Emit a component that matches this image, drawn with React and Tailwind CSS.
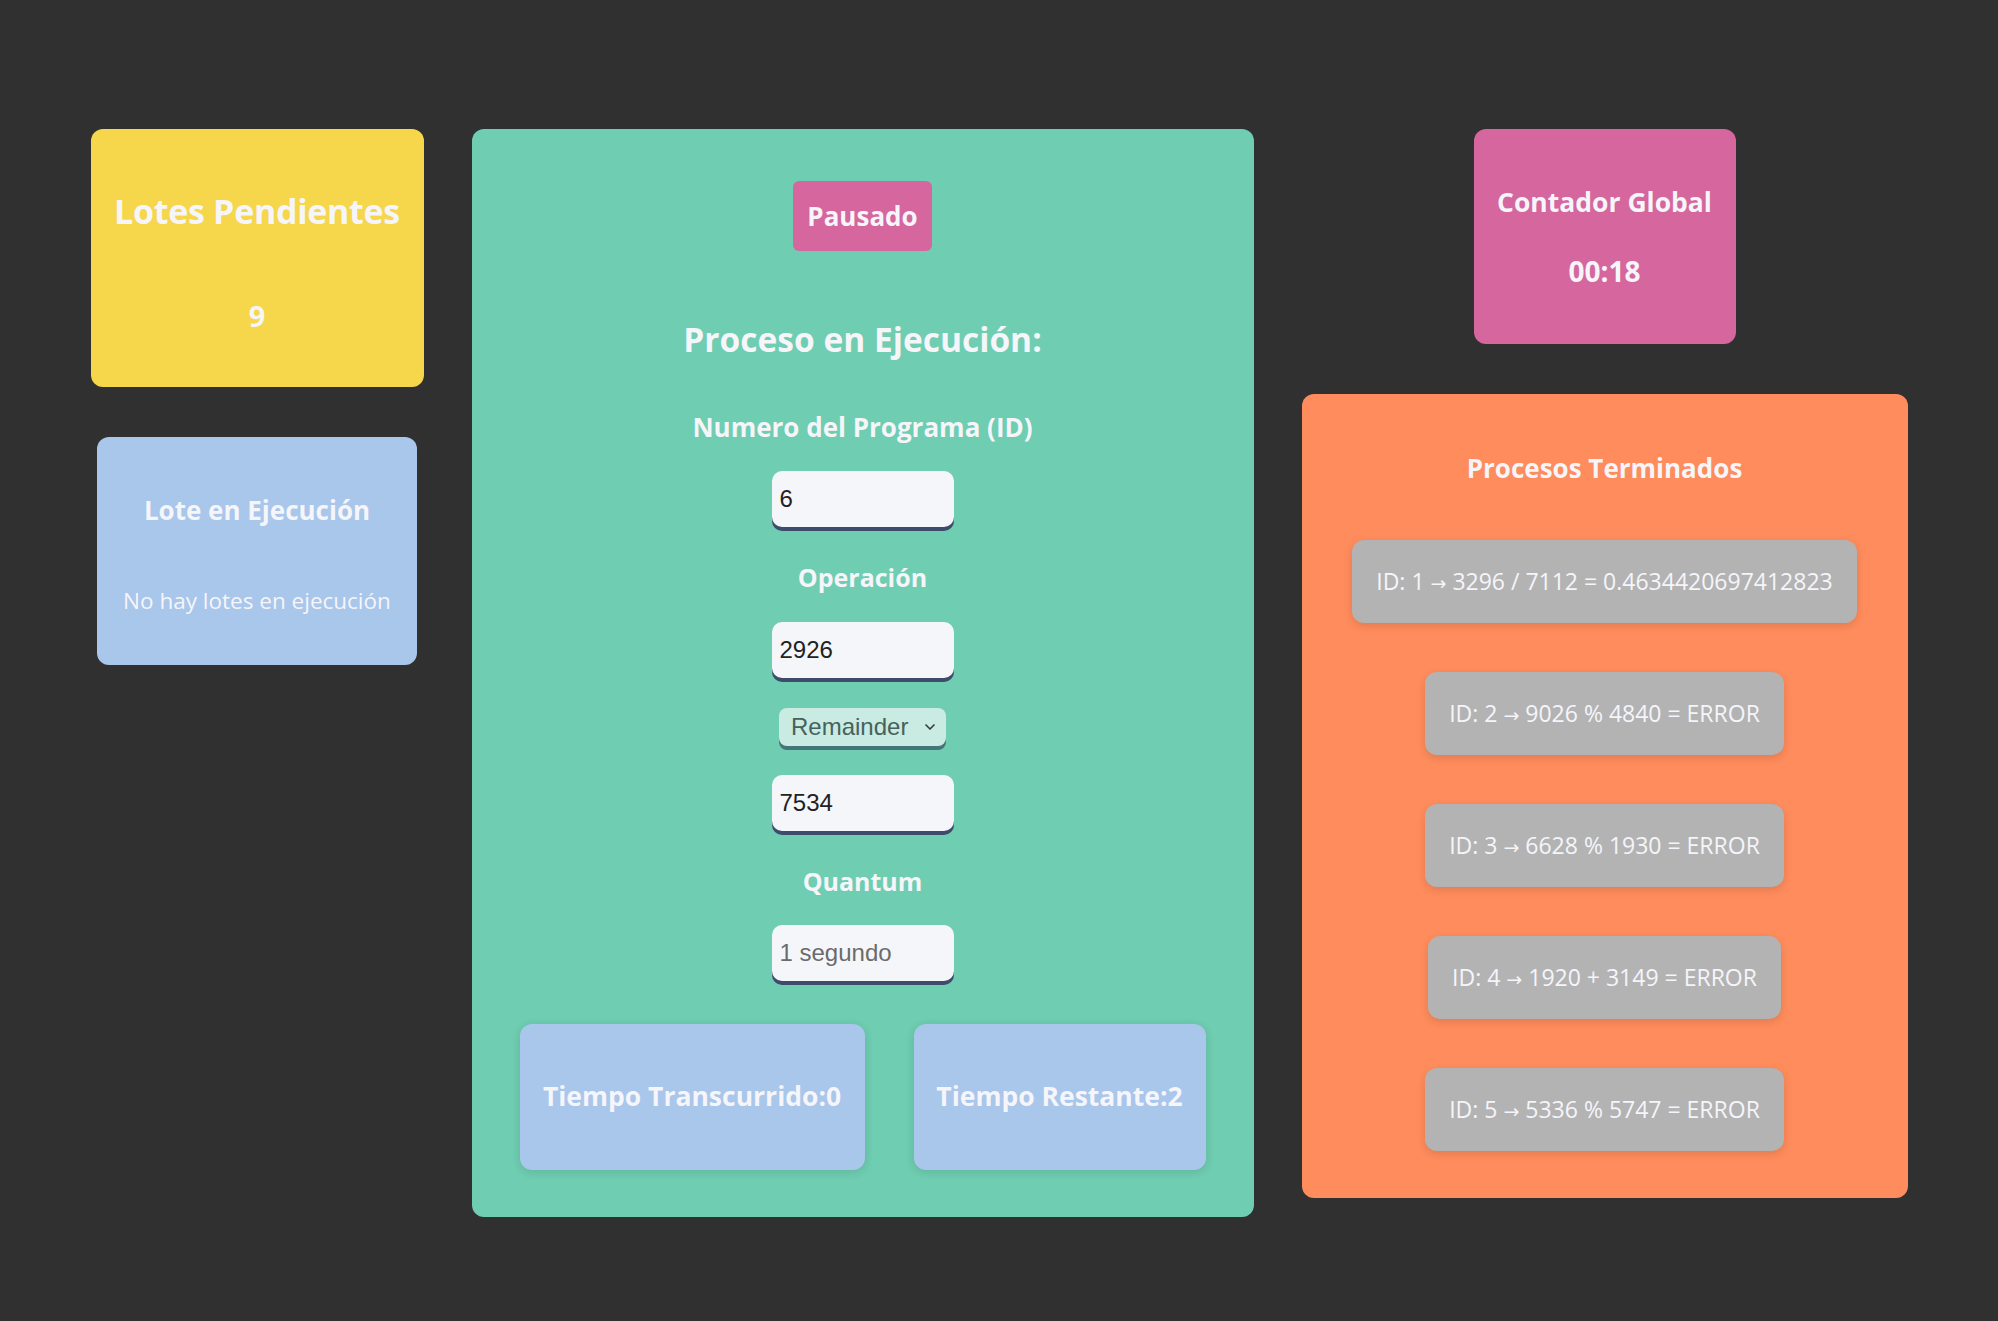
import { ChevronDown } from 'lucide-react';

const terminados = [
  ['ID: 1', '3296 / 7112 = 0.4634420697412823'],
  ['ID: 2', '9026 % 4840 = ERROR'],
  ['ID: 3', '6628 % 1930 = ERROR'],
  ['ID: 4', '1920 + 3149 = ERROR'],
  ['ID: 5', '5336 % 5747 = ERROR']
];

function Field({ value, muted }) {
  return (
    <input
      readOnly
      value={value}
      className={`h-[56px] w-[182px] rounded-[10px] bg-[#f5f6fa] pl-2 text-[24px] shadow-[0_4px_0_#3e4b6c] outline-none ${muted ? 'text-[#6b6b6b]' : 'text-[#222]'}`}
      style={{ fontFamily: '"Liberation Sans", Arial, sans-serif' }}
    />
  );
}

function Label({ children, className = '' }) {
  return (
    <div className={`flex h-[36px] items-center justify-center font-bold ${className}`}>{children}</div>
  );
}

export default function App() {
  return (
    <div
      className="min-h-[1321px] bg-[#303030] text-[#f5f5fa]"
      style={{ fontFamily: '"Open Sans", "Noto Sans", sans-serif' }}
    >
      <div className="flex items-start justify-center gap-12 pt-[129px]">
        {/* izquierda */}
        <div className="flex w-[333px] flex-col items-center gap-[50px]">
          <div className="flex h-[258px] w-[333px] flex-col items-center rounded-xl bg-[#f6d64b]">
            <div className="mt-[62px] flex h-[40px] items-center text-[34px] font-bold tracking-[-0.3px]">Lotes Pendientes</div>
            <div className="mt-[70px] flex h-[30px] items-center text-[29px] font-bold">9</div>
          </div>
          <div className="flex h-[228px] w-[320px] flex-col items-center rounded-xl bg-[#a9c6eb]">
            <div className="mt-[55px] flex h-[36px] items-center text-[26px] font-bold">Lote en Ejecución</div>
            <div className="mt-[55px] flex h-[36px] items-center text-[22.5px]">No hay lotes en ejecución</div>
          </div>
        </div>

        {/* centro */}
        <div className="flex w-[782px] flex-col items-center rounded-xl bg-[#6fcdb1] px-12 pb-[47px] pt-[52px]">
          <button className="h-[70px] w-[139px] rounded-md bg-[#d6669e] text-[26px] font-bold text-[#f5f5fa]">Pausado</button>
          <div className="mt-[68px] flex h-[40px] items-center text-[33.5px] font-bold">Proceso en Ejecución:</div>
          <Label className="mt-[50px] text-[26px]">Numero del Programa (ID)</Label>
          <div className="mt-[26px]"><Field value="6" /></div>
          <Label className="mt-[33px] text-[25px]">Operación</Label>
          <div className="mt-[26px]"><Field value="2926" /></div>
          <div className="relative mt-[30px]">
            <select
              className="h-[38px] w-[167px] appearance-none rounded-[8px] bg-[#c9ebe2] pl-[12px] text-[24px] text-[#45625c] shadow-[0_4px_0_#467478] outline-none"
              style={{ fontFamily: '"Liberation Sans", Arial, sans-serif' }}
              defaultValue="rem"
            >
              <option value="rem">Remainder</option>
            </select>
            <ChevronDown size={16} strokeWidth={2.5} className="pointer-events-none absolute right-[8px] top-[11px] text-[#2f3f3c]" />
          </div>
          <div className="mt-[29px]"><Field value="7534" /></div>
          <Label className="mt-[33px] text-[25px]">Quantum</Label>
          <div className="mt-[25px]"><Field value="1 segundo" muted /></div>
          <div className="mt-[43px] flex w-full justify-between">
            <div className="flex h-[146px] w-[345px] items-center justify-center rounded-xl bg-[#a9c6eb] text-[26.5px] font-bold shadow-[0_2px_10px_rgba(0,0,0,0.12)]">
              Tiempo Transcurrido:0
            </div>
            <div className="flex h-[146px] w-[292px] items-center justify-center rounded-xl bg-[#a9c6eb] text-[26.5px] font-bold shadow-[0_2px_10px_rgba(0,0,0,0.12)]">
              Tiempo Restante:2
            </div>
          </div>
        </div>

        {/* derecha */}
        <div className="flex w-[606px] flex-col items-center gap-[50px]">
          <div className="flex h-[215px] w-[262px] flex-col items-center rounded-xl bg-[#d6669e]">
            <div className="mt-[56px] flex h-[36px] items-center text-[26.5px] font-bold">Contador Global</div>
            <div className="mt-[32px] flex h-[36px] items-center text-[28px] font-bold">00:18</div>
          </div>
          <div className="flex w-[606px] flex-col items-center gap-[49px] rounded-xl bg-[#ff8c5c] pb-[47px] pt-[56px]">
            <div className="mb-[5px] flex h-[36px] items-center text-[26px] font-bold">Procesos Terminados</div>
            {terminados.map(([id, op]) => (
              <div
                key={id}
                className="flex h-[83px] items-center rounded-xl bg-[#b3b3b3] px-6 text-[23px] text-[#f5f5fa] shadow-[0_3px_8px_rgba(0,0,0,0.12)]"
              >
                <span className="whitespace-nowrap">
                  {id} <span className="text-[19px]" style={{ fontFamily: '"DejaVu Sans", sans-serif' }}>→</span> {op}
                </span>
              </div>
            ))}
          </div>
        </div>
      </div>
    </div>
  );
}
